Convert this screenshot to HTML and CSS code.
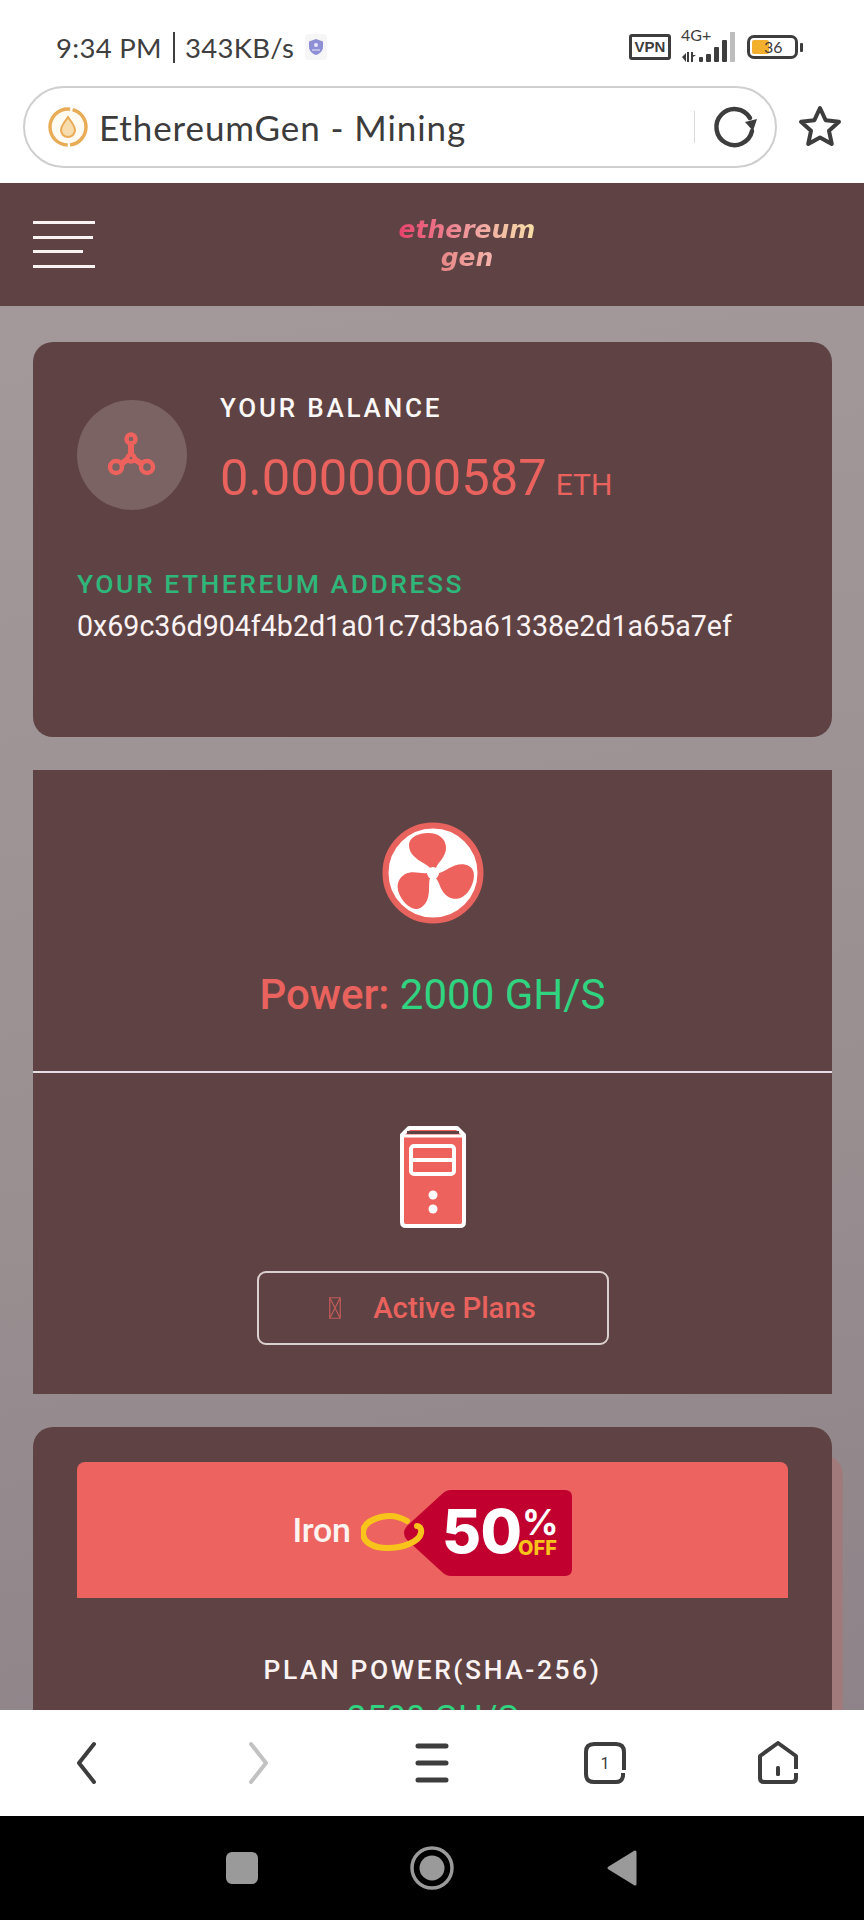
FILE: index.html
```html
<!DOCTYPE html>
<html lang="en">
<head>
<meta charset="utf-8">
<title>EthereumGen - Mining</title>
<link rel="stylesheet" href="styles.css">
</head>
<body>
<div class="phone">
  <div class="status">
    <div class="status-left">
      <span class="status-text">9:34 PM</span><span class="status-bar-sep"></span><span class="status-text">343KB/s</span>
      <span class="shield-tile">
        <svg width="16" height="18" viewBox="0 0 16 18"><path d="M8 1 L15 3.5 V9 C15 13 11.500 16 8 17 C4.500 16 1 13 1 9 V3.500 Z" fill="#8f8fd6"/><circle cx="8" cy="7" r="2" fill="#e8e8fa"/><path d="M4 12h8" stroke="#e8e8fa" stroke-width="1"/></svg>
      </span>
    </div>
    <div class="status-right">
      <span class="vpn">VPN</span>
      <div class="network">
        <span class="net-label">4G+</span>
        <svg width="56" height="42" viewBox="0 0 56 42" class="net-bars">
          <g fill="#3d3d3d"><path d="M2 31l4-4v9zM7 26h2v10H7z"/><path d="M11 26h2v3l3 0-3 2v5h-2z"/></g>
          <g fill="#3d3d3d"><rect x="19" y="31" width="4" height="5" rx="1"/><rect x="26" y="28" width="5" height="8" rx="1"/><rect x="34" y="21" width="5" height="15" rx="1"/><rect x="42" y="14" width="5" height="22" rx="1"/></g>
          <rect x="50" y="6" width="5" height="30" fill="#bdbdbd"/>
        </svg>
      </div>
      <div class="battery-wrap">
        <div class="battery"><span class="battery-fill"></span><span class="battery-num">36</span></div>
        <span class="battery-nub"></span>
      </div>
    </div>
  </div>

  <div class="browser-bar">
    <div class="url">
      <svg class="favicon" width="42" height="42" viewBox="0 0 42 42"><circle cx="21" cy="21" r="18" fill="#fffaf2" stroke="#e9ab55" stroke-width="3.400" stroke-dasharray="26 2.500 58 2.500 24 0"/><path d="M21 11 C25 17 28 20 28 24 A7 7 0 0 1 14 24 C14 20 17 17 21 11Z" fill="#f7dcae" stroke="#e9ab55" stroke-width="2"/></svg>
      <span class="url-text">EthereumGen - Mining</span>
      <span class="url-sep"></span>
      <svg class="reload" width="46" height="46" viewBox="0 0 46 46"><path d="M38 14 A18 18 0 1 0 40 27" fill="none" stroke="#3d3d3d" stroke-width="4.500" stroke-linecap="round"/><path d="M33 18 L45 15 L41 27 Z" fill="#3d3d3d"/></svg>
    </div>
    <svg class="star" width="44" height="44" viewBox="0 0 44 44"><path d="M22 3 L27.600 15.200 L41 16.800 L31 25.800 L33.800 39 L22 32.400 L10.200 39 L13 25.800 L3 16.800 L16.400 15.200 Z" fill="none" stroke="#3d3d3d" stroke-width="4" stroke-linejoin="round"/></svg>
  </div>

  <header class="site-header">
    <div class="hamburger"><span class="ham-line"></span><span class="ham-line ham-b"></span><span class="ham-line ham-c"></span><span class="ham-line"></span></div>
    <div class="logo"><span class="logo-line">ethereum</span><span class="logo-line logo-gen">gen</span></div>
  </header>

  <main class="content">
    <section class="card balance-card">
      <div class="balance-row">
        <div class="coin">
          <svg width="50" height="46" viewBox="0 0 50 46"><g fill="none" stroke="#ee625d" stroke-width="4.500"><circle cx="24" cy="7" r="4.500"/><circle cx="9" cy="35" r="6"/><circle cx="40" cy="35" r="6"/><path d="M24 11 V22 M14 32 L21 27 M35 32 L27 27" stroke-width="6"/><circle cx="24" cy="26" r="3.500"/></g></svg>
        </div>
        <div class="balance-text">
          <div class="balance-label">YOUR BALANCE</div>
          <div class="balance-value">0.0000000587<span class="balance-unit">ETH</span></div>
        </div>
      </div>
      <div class="addr-label">YOUR ETHEREUM ADDRESS</div>
      <div class="addr">0x69c36d904f4b2d1a01c7d3ba61338e2d1a65a7ef</div>
    </section>

    <section class="card-flat">
      <div class="power-part">
        <svg width="102" height="102" viewBox="-51 -51 102 102"><circle r="47.500" fill="#fff" stroke="#e8625e" stroke-width="6"/><g fill="#ee625d"><path d="M-3,-5 C-6,-10 -24,-14 -24,-28 C-24,-36 -14,-40 -5,-40 C6,-40 13,-34 13,-25 C13,-16 5,-11 3,-5 Z"/><path d="M-3,-5 C-6,-10 -24,-14 -24,-28 C-24,-36 -14,-40 -5,-40 C6,-40 13,-34 13,-25 C13,-16 5,-11 3,-5 Z" transform="rotate(120)"/><path d="M-3,-5 C-6,-10 -24,-14 -24,-28 C-24,-36 -14,-40 -5,-40 C6,-40 13,-34 13,-25 C13,-16 5,-11 3,-5 Z" transform="rotate(240)"/></g><circle r="6" fill="#fff"/></svg>
        <div class="power-text"><span class="power-label">Power:</span> <span class="power-value">2000 GH/S</span></div>
      </div>
      <div class="plans-part">
        <svg width="66" height="102" viewBox="0 0 66 102"><path d="M9 2 H57 L64 9 V96 Q64 100 60 100 H6 Q2 100 2 96 V9 Z" fill="#ee625d" stroke="#fff" stroke-width="4" stroke-linejoin="round"/><path d="M4 10 H62" stroke="#fff" stroke-width="3"/><path d="M7 5 H59 V8 H7Z" fill="#5f4344"/><rect x="11" y="20" width="43" height="28" rx="3" fill="none" stroke="#fff" stroke-width="4"/><path d="M11 34 H54" stroke="#fff" stroke-width="4"/><circle cx="33" cy="69" r="4.500" fill="#fff"/><circle cx="33" cy="83" r="4.500" fill="#fff"/></svg>
        <a class="plans-btn"><svg class="missing-glyph" width="12" height="22" viewBox="0 0 12 22"><path d="M.75 .75 H11.250 V21.250 H.75 Z M.75 .75 L11.250 21.250 M11.250 .75 L.75 21.250" fill="none" stroke="#c45a58" stroke-width="1.200"/></svg><span>Active Plans</span></a>
      </div>
    </section>

    <section class="card plan-card">
      <div class="plan-banner">
        <span class="plan-name">Iron</span>
        <svg class="tag" width="212" height="86" viewBox="0 0 212 86">
          <path d="M90 0 H204 Q211 0 211 7 V79 Q211 86 204 86 H90 Q85 86 81 82 L46 50 Q40 43 46 36 L81 4 Q85 0 90 0Z" fill="#c10030"/>
          <path d="M46 31 C38 26 28 25 20 27 C8 30 2 36 2 43 C2 52 12 58 26 58 C42 58 58 52 60 43 C61 38 58 36 56 36" fill="none" stroke="#f8c41c" stroke-width="6" stroke-linecap="round"/>
          <text x="81" y="63" class="tag-big">50</text>
          <text x="161" y="45" class="tag-pct">%</text>
          <text x="157" y="65" class="tag-off">OFF</text>
        </svg>
      </div>
      <div class="plan-label">PLAN POWER(SHA-256)</div>
      <div class="plan-value">2500 GH/S</div>
    </section>
  </main>

  <nav class="bottom-nav">
    <span class="nav-cell"><svg width="24" height="44" viewBox="0 0 24 44"><path d="M20 3 L5 22 L20 41" fill="none" stroke="#3d3d3d" stroke-width="4" stroke-linecap="round" stroke-linejoin="round"/></svg></span>
    <span class="nav-cell"><svg width="24" height="44" viewBox="0 0 24 44"><path d="M4 3 L19 22 L4 41" fill="none" stroke="#c2c2c2" stroke-width="4" stroke-linecap="round" stroke-linejoin="round"/></svg></span>
    <span class="nav-cell"><svg width="36" height="42" viewBox="0 0 36 42"><path d="M4 4 H32 M4 21 H32 M4 38 H32" stroke="#3d3d3d" stroke-width="5" stroke-linecap="round"/></svg></span>
    <span class="nav-cell"><svg width="42" height="42" viewBox="0 0 42 42"><path d="M39 31 V34 Q38 40 32 40 H10 Q2 40 2 32 V10 Q2 2 10 2 H32 Q40 2 40 10 V28" fill="none" stroke="#3d3d3d" stroke-width="4"/><text x="21" y="27" class="tab-num">1</text></svg></span>
    <span class="nav-cell"><svg width="40" height="44" viewBox="0 0 40 44"><path d="M38 32 V37 Q38 41 34 41 H6 Q2 41 2 37 V15 L20 2 L38 15 V28" fill="none" stroke="#3d3d3d" stroke-width="4" stroke-linejoin="round"/><rect x="18" y="25" width="4" height="10" rx="1.500" fill="#3d3d3d"/></svg></span>
  </nav>

  <nav class="sys-nav">
    <span class="sys-square"></span>
    <svg width="44" height="44" viewBox="0 0 44 44"><circle cx="22" cy="22" r="20" fill="none" stroke="#9a9a9a" stroke-width="3.500"/><circle cx="22" cy="22" r="12.500" fill="#9a9a9a"/></svg>
    <svg width="32" height="38" viewBox="0 0 32 38"><path d="M29 3 V35 L3 19 Z" fill="#9a9a9a" stroke="#9a9a9a" stroke-width="3" stroke-linejoin="round"/></svg>
  </nav>
</div>
</body>
</html>
```
FILE: styles.css
```css
* { box-sizing: border-box; }
html, body { margin: 0; padding: 0; }
body { font-family: Roboto, "Liberation Sans", sans-serif; background: #fff; }
.phone { width: 864px; height: 1920px; display: flex; flex-direction: column; overflow: hidden; }

.status { height: 86px; flex: none; display: flex; justify-content: space-between; align-items: center; padding: 8px 61px 0 56px; }
.status-left { display: flex; align-items: center; }
.status-text { font-family: Lato, sans-serif; font-size: 27.500px; color: #3f3f3f; letter-spacing: 0.300px; }
.status-bar-sep { width: 2px; height: 31px; background: #3f3f3f; margin: 0 10px 0 11px; }
.shield-tile { width: 22px; height: 26px; margin-left: 11px; display: flex; align-items: center; justify-content: center; background: #f6f6f6; border-radius: 4px; }
.status-right { display: flex; align-items: center; }
.vpn { width: 42px; height: 26px; border: 3px solid #3d3d3d; border-radius: 3px; font-size: 15px; line-height: 20px; font-weight: 700; text-align: center; color: #3d3d3d; font-family: "Liberation Sans", sans-serif; }
.network { width: 56px; height: 42px; margin-left: 9px; position: relative; }
.net-label { font-family: Lato, sans-serif; font-size: 16px; color: #3d3d3d; position: absolute; left: 1px; top: 1px; line-height: 16px; }
.net-bars { position: absolute; left: 0; top: 0; }
.battery-wrap { display: flex; align-items: center; margin-left: 11px; }
.battery { width: 51px; height: 24px; border: 3px solid #3d3d3d; border-radius: 7px; position: relative; display: flex; align-items: center; padding-left: 14px; }
.battery-fill { position: absolute; left: 2px; top: 2px; bottom: 2px; width: 17px; background: #f3b02f; border-radius: 2px; }
.battery-num { position: relative; font-family: Lato, sans-serif; font-size: 16px; line-height: 16px; color: #3d3d3d; }
.battery-nub { width: 3px; height: 9px; margin-left: 2px; background: #3d3d3d; border-radius: 1px; }

.browser-bar { height: 97px; flex: none; display: flex; align-items: flex-start; padding-left: 23px; }
.url { width: 754px; height: 82px; border: 2.500px solid #cfcfcf; border-radius: 41px; display: flex; align-items: center; padding: 0 17px 0 22px; background: #fff; }
.favicon { flex: none; }
.url-text { flex: 1; font-family: Lato, sans-serif; font-size: 35px; color: #3c3c3c; margin-left: 10px; letter-spacing: 0.900px; white-space: nowrap; }
.url-sep { width: 1px; height: 32px; background: #d9d9d9; flex: none; }
.reload { flex: none; margin-left: 17px; }
.star { flex: none; margin: 19px 0 0 21px; }

.site-header { height: 123px; flex: none; background: #5f4344; display: flex; align-items: center; padding-left: 33px; }
.hamburger { width: 62px; height: 47px; display: flex; flex-direction: column; justify-content: space-between; }
.ham-line { display: block; height: 3px; width: 62px; background: #f8f2f2; }
.ham-b { width: 60px; }
.ham-c { width: 50px; }
.logo { margin-left: 303px; width: 138px; display: flex; flex-direction: column; align-items: center; font-family: "DejaVu Sans", sans-serif; font-weight: 700; font-style: italic; font-size: 25px; line-height: 28px; margin-top: -2px; }
.logo-line { background: linear-gradient(90deg, #e6406a 0%, #f0a0a0 55%, #f8e2a8 100%); -webkit-background-clip: text; background-clip: text; color: transparent; width: 140px; text-align: center; white-space: nowrap; }
.logo-gen { background: linear-gradient(90deg, #e88a8a 35%, #f4b0a8 65%); -webkit-background-clip: text; background-clip: text; }

.content { flex: 1; min-height: 0; overflow: hidden; background: linear-gradient(170deg, #a3989a 0%, #9a9092 55%, #8e8388 100%); padding: 36px 32px 0 33px; display: flex; flex-direction: column; gap: 33px; }
.card { flex: none; background: #5f4344; border-radius: 20px; }
.balance-card { height: 395px; padding: 58px 44px 0; }
.balance-row { display: flex; gap: 33px; height: 110px; }
.coin { width: 110px; height: 110px; border-radius: 50%; background: #7b6263; display: flex; align-items: center; justify-content: center; flex: none; }
.balance-label { font-size: 26px; line-height: 28px; letter-spacing: 2.800px; color: #fbf8f8; font-weight: 500; margin-top: -6px; }
.balance-value { font-size: 50.700px; line-height: 58px; color: #e9625d; margin-top: 27px; white-space: nowrap; font-weight: 400; }
.balance-unit { font-size: 30px; margin-left: 9px; }
.addr-label { margin-top: 60px; font-size: 26.500px; line-height: 28px; letter-spacing: 2.500px; color: #2fb67a; font-weight: 500; }
.addr { margin-top: 13px; font-size: 28.600px; line-height: 30px; color: #fbf3f3; white-space: nowrap; }

.card-flat { flex: none; height: 624px; background: #5f4344; display: flex; flex-direction: column; }
.power-part { height: 303px; padding-top: 52px; border-bottom: 2px solid #e6dfe6; display: flex; flex-direction: column; align-items: center; }
.power-text { margin-top: 48px; font-size: 42px; line-height: 46px; white-space: nowrap; }
.power-label { color: #e9625d; font-weight: 500; }
.power-value { color: #2fd380; }
.plans-part { display: flex; flex-direction: column; align-items: center; padding-top: 53px; }
.plans-btn { margin-top: 43px; width: 352px; height: 74px; border: 2.500px solid #dccfcf; border-radius: 9px; display: flex; align-items: center; justify-content: center; font-size: 29.300px; font-weight: 500; color: #e9625d; gap: 32px; }
.missing-glyph { flex: none; }

.plan-card { height: 640px; padding: 35px 44px 0; box-shadow: 11px 28px 0 #a17a7c; }
.plan-banner { height: 136px; background: #ec635f; border-radius: 8px 8px 0 0; display: flex; align-items: center; justify-content: center; gap: 10px; }
.plan-name { font-size: 34px; font-weight: 500; color: #fdf3f0; letter-spacing: -0.300px; }
.tag { flex: none; margin-top: 6px; }
.tag-big { font-family: Inter, sans-serif; font-weight: 800; font-size: 60px; letter-spacing: -0.500px; fill: #fff; }
.tag-pct { font-family: Inter, sans-serif; font-weight: 700; font-size: 36px; fill: #fff; }
.tag-off { font-family: Inter, sans-serif; font-weight: 800; font-size: 20px; fill: #f8c41c; }
.plan-label { margin-top: 57px; text-align: center; font-size: 26.400px; line-height: 30px; letter-spacing: 2.600px; color: #fbf3f3; font-weight: 500; }
.plan-value { margin-top: 12px; text-align: center; font-size: 35px; line-height: 44px; color: #2fd380; }

.bottom-nav { height: 106px; flex: none; background: #fff; display: grid; grid-template-columns: repeat(5, 1fr); align-items: center; }
.nav-cell { display: flex; justify-content: center; align-items: center; }
.tab-num { font-family: Roboto, sans-serif; font-size: 16px; text-anchor: middle; fill: #3d3d3d; }

.sys-nav { height: 104px; flex: none; background: #000; display: flex; align-items: center; justify-content: center; gap: 152px; }
.sys-square { width: 32px; height: 32px; background: #9a9a9a; border-radius: 6px; }
```
